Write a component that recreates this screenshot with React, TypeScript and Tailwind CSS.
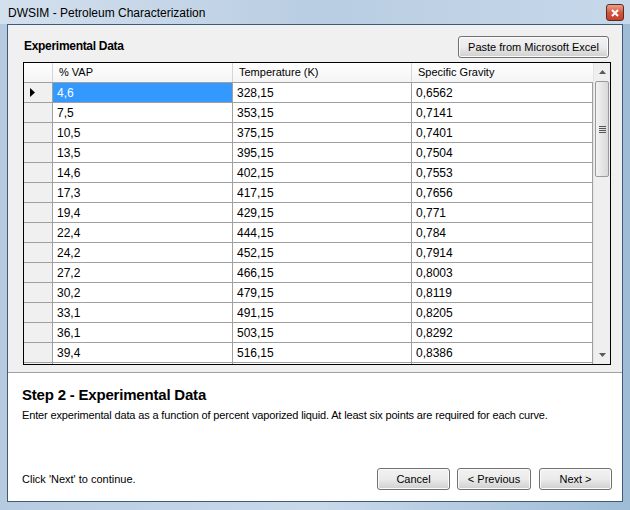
const rows: [string, string, string][] = [
  ['4,6', '328,15', '0,6562'],
  ['7,5', '353,15', '0,7141'],
  ['10,5', '375,15', '0,7401'],
  ['13,5', '395,15', '0,7504'],
  ['14,6', '402,15', '0,7553'],
  ['17,3', '417,15', '0,7656'],
  ['19,4', '429,15', '0,771'],
  ['22,4', '444,15', '0,784'],
  ['24,2', '452,15', '0,7914'],
  ['27,2', '466,15', '0,8003'],
  ['30,2', '479,15', '0,8119'],
  ['33,1', '491,15', '0,8205'],
  ['36,1', '503,15', '0,8292'],
  ['39,4', '516,15', '0,8386'],
  ['', '', ''],
]

function WinButton({ label, className }: { label: string; className: string }) {
  return (
    <button
      className={`h-[22px] rounded-[3px] border border-[#707070] bg-gradient-to-b from-[#f2f2f2] via-[#ebebeb] to-[#cfcfcf] text-[11px] text-black shadow-[inset_0_0_0_1px_#fcfcfc] ${className}`}
    >
      {label}
    </button>
  )
}

function App() {
  return (
    <div
      className="w-[630px] h-[510px] flex flex-col bg-gradient-to-r from-[#b7cbe0] via-[#c9d9ea] to-[#9fbcd6] overflow-hidden"
      style={{ fontFamily: '"Liberation Sans", Arial, sans-serif' }}
    >
      {/* 標題列 */}
      <div className="h-[24px] flex items-center justify-between pl-[8px] pr-[6px] bg-gradient-to-r from-[#d3e0ee] via-[#b9cde2] to-[#c6d8ea]">
        <span className="text-[12px] text-black mt-[1px]">DWSIM - Petroleum Characterization</span>
        <div className="w-[18px] h-[17px] mt-[1px] rounded-[3px] border border-[#5d2a20] bg-gradient-to-b from-[#e9a08c] via-[#d4563c] to-[#c0412a] flex items-center justify-center">
          <svg className="w-[8px] h-[8px]" viewBox="0 0 8 8">
            <path d="M1 1 L7 7 M7 1 L1 7" stroke="white" strokeWidth={2} />
          </svg>
        </div>
      </div>

      {/* 視窗內容 */}
      <div className="flex-1 mx-[7px] mb-[8px] border border-[#3d5b78] flex flex-col bg-white">
        {/* 上方資料區 */}
        <div className="h-[348px] shrink-0 bg-[#f0f0f0] border-b border-[#a0a0a0] pl-[15px] pr-[11px] pt-[11px] flex flex-col">
          <div className="flex items-center justify-between h-[22px]">
            <span className="text-[12px] font-bold text-black tracking-[-0.3px] -mt-[2px] ml-[1px]">Experimental Data</span>
            <WinButton label="Paste from Microsoft Excel" className="w-[151px] mr-[2px]" />
          </div>

          {/* 資料表格 */}
          <div className="mt-[4px] h-[303px] border border-black bg-[#f0f0f0] flex overflow-hidden">
            <div className="flex-1 flex flex-col overflow-hidden">
              <div className="h-[20px] flex shrink-0 bg-gradient-to-b from-white to-[#f4f4f4] border-b border-[#a0a0a0] text-[11px] text-black">
                <div className="w-[29px] border-r border-[#d5d5d5]" />
                <div className="w-[180px] pl-[6px] flex items-center border-r border-[#d5d5d5]">% VAP</div>
                <div className="w-[179px] pl-[6px] flex items-center border-r border-[#d5d5d5]">Temperature (K)</div>
                <div className="flex-1 pl-[6px] flex items-center">Specific Gravity</div>
              </div>
              {rows.map((r, i) => (
                <div key={i} className="h-[20px] shrink-0 flex text-[12px] text-black">
                  <div className="w-[29px] bg-[#f0f0f0] border-r border-b border-[#a0a0a0] flex items-center pl-[6px]">
                    {i === 0 && (
                      <svg className="w-[6px] h-[9px]" viewBox="0 0 6 9">
                        <path d="M0 0 L5 4.5 L0 9 Z" fill="black" />
                      </svg>
                    )}
                  </div>
                  <div
                    className={`w-[180px] pl-[4px] flex items-center border-r border-b border-[#a0a0a0] ${
                      i === 0 ? 'bg-[#3399ff] text-white' : 'bg-white'
                    }`}
                  >
                    {r[0]}
                  </div>
                  <div className="w-[179px] pl-[4px] flex items-center bg-white border-r border-b border-[#a0a0a0]">{r[1]}</div>
                  <div className="flex-1 pl-[4px] flex items-center bg-white border-r border-b border-[#a0a0a0]">{r[2]}</div>
                </div>
              ))}
            </div>

            {/* 捲軸 */}
            <div className="w-[17px] flex flex-col bg-[#efefef] border-l border-[#e4e4e4]">
              <div className="h-[18px] flex items-center justify-center">
                <svg className="w-[7px] h-[4px]" viewBox="0 0 7 4">
                  <path d="M3.5 0 L7 4 L0 4 Z" fill="#5a5a5a" />
                </svg>
              </div>
              <div className="h-[96px] mx-[1px] rounded-[2px] border border-[#9a9a9a] bg-gradient-to-r from-[#f3f3f3] via-[#e6e6e6] to-[#d8d8d8] flex items-center justify-center">
                <div className="flex flex-col gap-[1px]">
                  <div className="w-[7px] h-[1px] bg-[#555]" />
                  <div className="w-[7px] h-[1px] bg-[#555]" />
                  <div className="w-[7px] h-[1px] bg-[#555]" />
                  <div className="w-[7px] h-[1px] bg-[#555]" />
                </div>
              </div>
              <div className="flex-1" />
              <div className="h-[18px] flex items-center justify-center">
                <svg className="w-[7px] h-[4px]" viewBox="0 0 7 4">
                  <path d="M0 0 L7 0 L3.5 4 Z" fill="#5a5a5a" />
                </svg>
              </div>
            </div>
          </div>
        </div>

        {/* 下方說明區 */}
        <div className="flex-1 flex flex-col pl-[14px] pr-[10px] pt-[11px] pb-[11px] bg-white">
          <div className="text-[15px] font-bold text-black tracking-[-0.2px]">Step 2 - Experimental Data</div>
          <div className="text-[11px] text-black tracking-[-0.15px]">
            Enter experimental data as a function of percent vaporized liquid. At least six points are required for each curve.
          </div>
          <div className="flex-1" />
          <div className="flex items-center">
            <span className="text-[11px] text-black flex-1">Click 'Next' to continue.</span>
            <WinButton label="Cancel" className="w-[73px]" />
            <WinButton label="< Previous" className="w-[74px] ml-[7px]" />
            <WinButton label="Next >" className="w-[73px] ml-[8px]" />
          </div>
        </div>
      </div>
    </div>
  )
}

export default App
